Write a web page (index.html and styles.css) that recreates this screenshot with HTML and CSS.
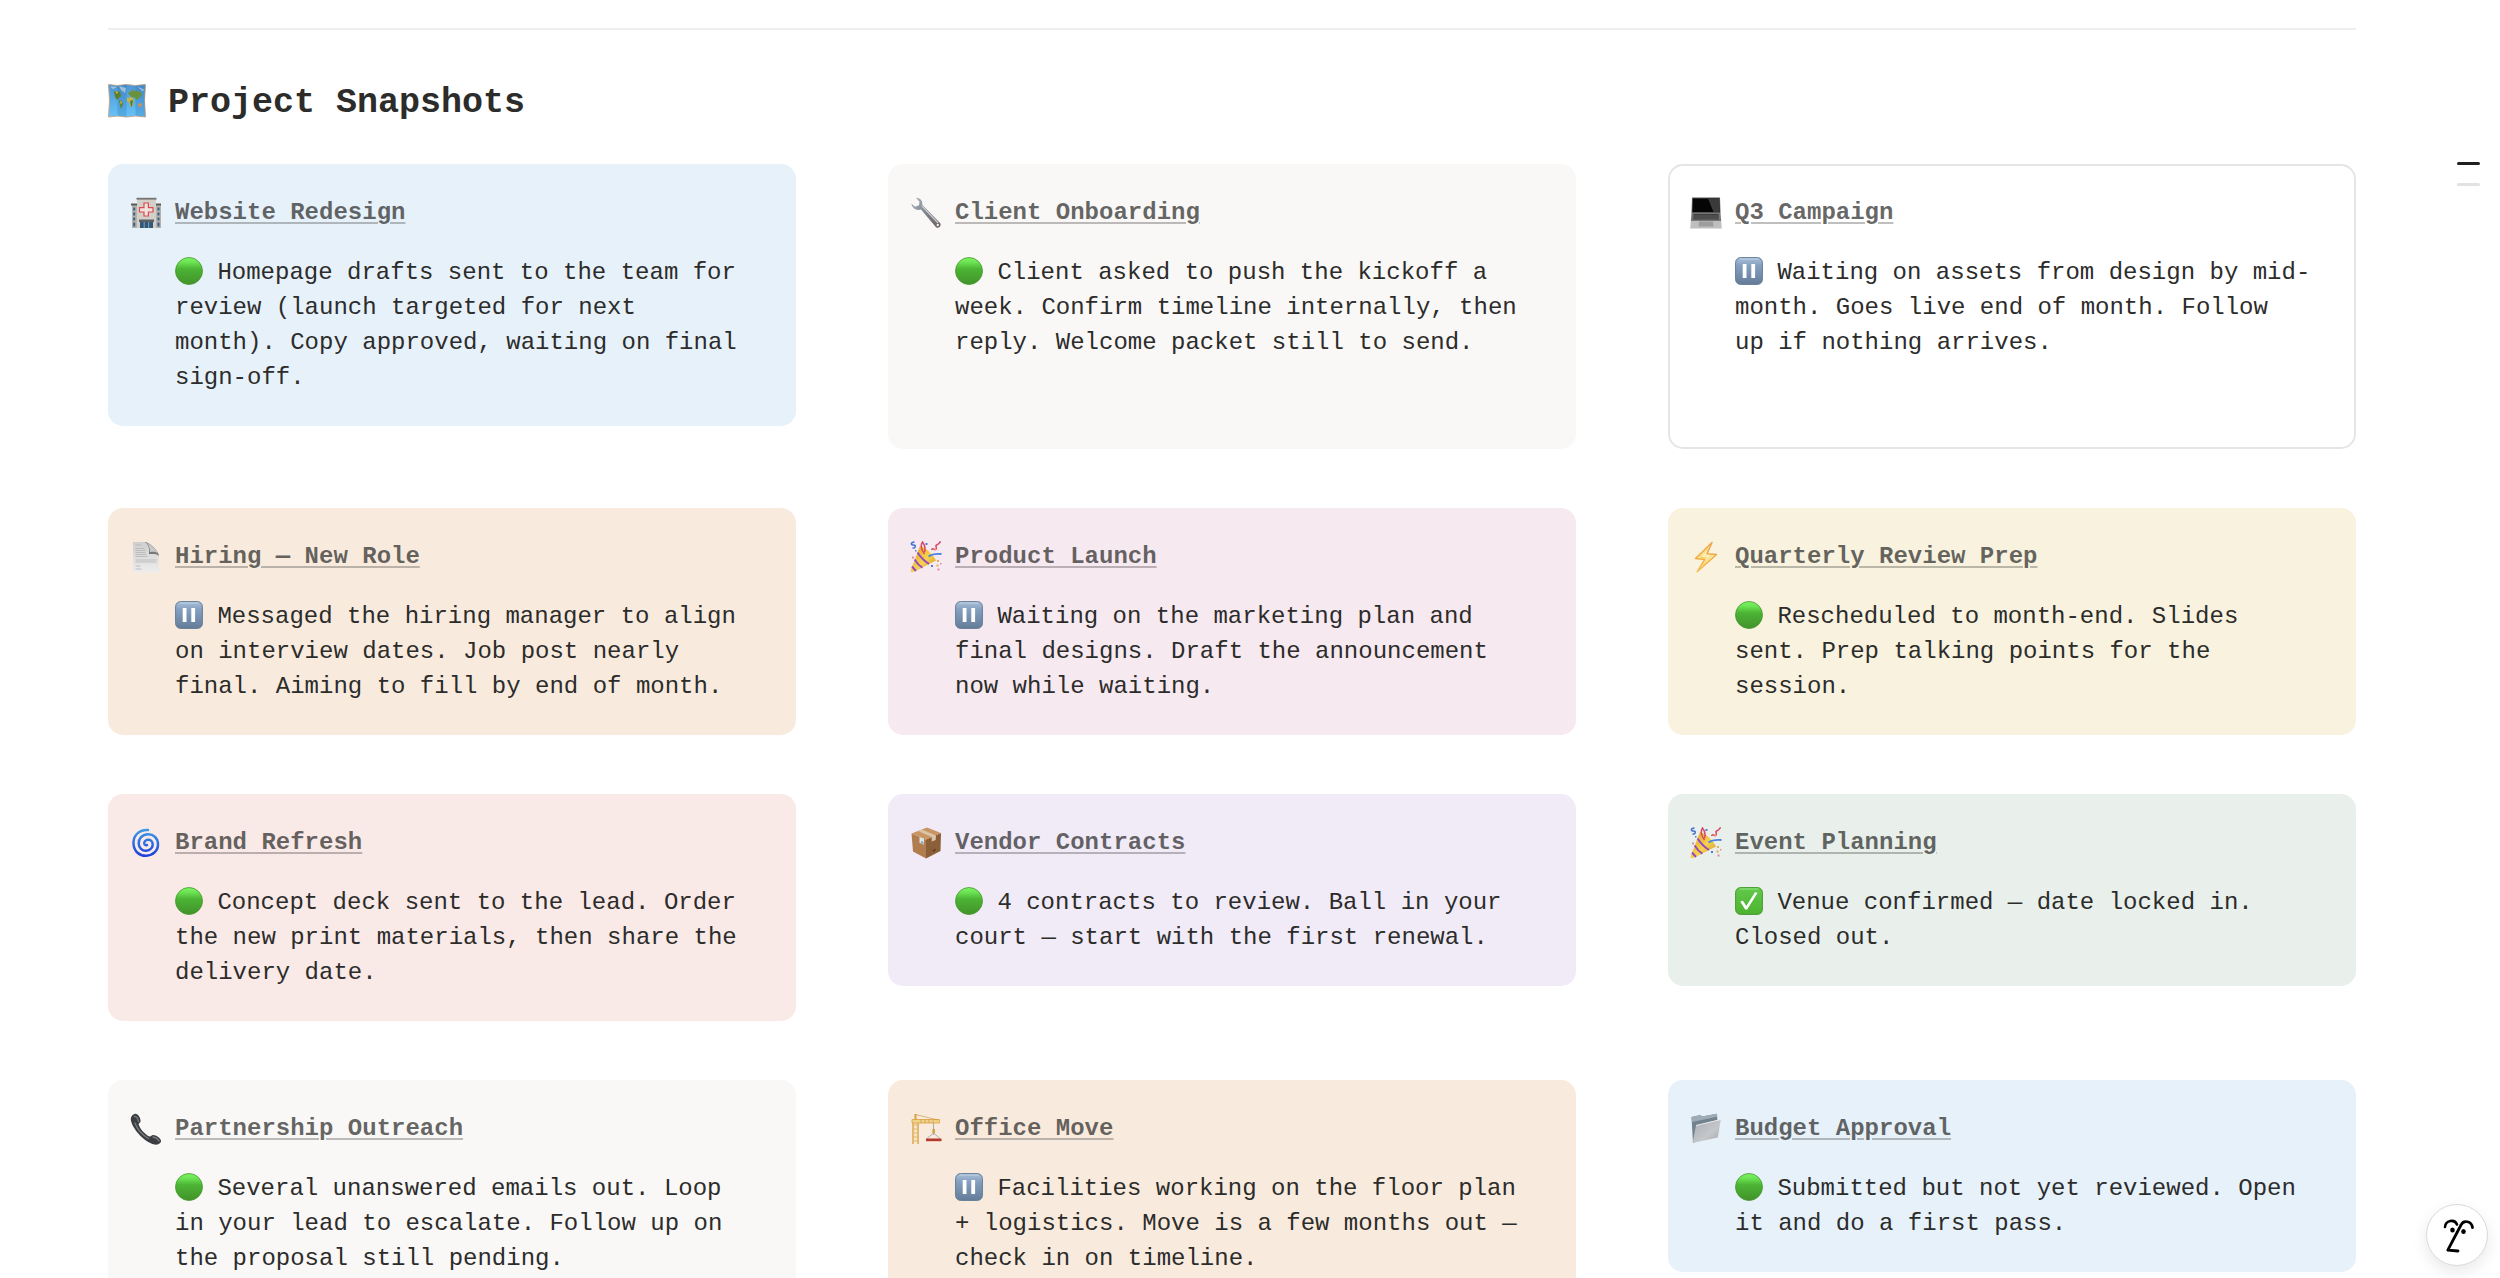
FILE: index.html
```html
<!DOCTYPE html>
<html lang="en">
<head>
<meta charset="utf-8">
<meta name="viewport" content="width=device-width, initial-scale=1">
<title>Project Snapshots</title>
<link rel="stylesheet" href="styles.css">
</head>
<body>
<svg class="sprite" aria-hidden="true">
  <defs>
    <linearGradient id="g-green" x1="0" y1="0" x2="0" y2="1"><stop offset="0" stop-color="#7df563"/><stop offset=".18" stop-color="#6be352"/><stop offset=".42" stop-color="#4cb435"/><stop offset="1" stop-color="#42932a"/></linearGradient>
    <linearGradient id="g-blue" x1="0" y1="0" x2="0" y2="1"><stop offset="0" stop-color="#a9bfd8"/><stop offset=".3" stop-color="#84a0c0"/><stop offset="1" stop-color="#647c98"/></linearGradient>
    <linearGradient id="g-check" x1="0" y1="0" x2="0" y2="1"><stop offset="0" stop-color="#62c94b"/><stop offset="1" stop-color="#4db32f"/></linearGradient>
    <linearGradient id="g-sea" x1="0" y1="0" x2="0" y2="1"><stop offset="0" stop-color="#4e95d2"/><stop offset="1" stop-color="#67c3f7"/></linearGradient>
    <linearGradient id="g-steel" x1="0" y1="0" x2="1" y2="1"><stop offset="0" stop-color="#a9b6c2"/><stop offset=".5" stop-color="#7f858c"/><stop offset="1" stop-color="#6c5c5c"/></linearGradient>
    <linearGradient id="g-swirl" x1="0" y1="0" x2="0" y2="1"><stop offset="0" stop-color="#3a9be6"/><stop offset="1" stop-color="#1f3fdc"/></linearGradient>
    <linearGradient id="g-cone" x1="0" y1="0" x2="1" y2="1"><stop offset="0" stop-color="#d99a1f"/><stop offset=".55" stop-color="#f7d34e"/><stop offset="1" stop-color="#c98a1c"/></linearGradient>
    <linearGradient id="g-paper" x1="0" y1="0" x2="0" y2="1"><stop offset="0" stop-color="#cfcfcf"/><stop offset="1" stop-color="#ededed"/></linearGradient>
    <linearGradient id="g-bolt" x1="0" y1="0" x2="0" y2="1"><stop offset="0" stop-color="#f0a350"/><stop offset=".5" stop-color="#f2a93b"/><stop offset="1" stop-color="#f6bd55"/></linearGradient>
    <linearGradient id="g-folder" x1="0" y1="0" x2="1" y2="1"><stop offset="0" stop-color="#a8aeb3"/><stop offset=".6" stop-color="#c5c7ca"/><stop offset="1" stop-color="#a2a5a9"/></linearGradient>
  </defs>

  <symbol id="on-track" viewBox="0 0 28 28">
    <circle cx="14" cy="14" r="13.5" fill="url(#g-green)" stroke="#48972f" stroke-opacity=".8"/>
  </symbol>
  <symbol id="paused" viewBox="0 0 28 28">
    <rect x=".6" y=".6" width="26.8" height="26.8" rx="5" fill="url(#g-blue)" stroke="#647c98"/>
    <path d="M5 2h18" stroke="#c0d0e1" stroke-linecap="round"/>
    <path d="M7.7 7h3.8v14H7.7zM16.3 7h3.8v14h-3.8z" fill="#fff"/>
  </symbol>
  <symbol id="done" viewBox="0 0 28 28">
    <rect x=".6" y=".6" width="26.8" height="26.8" rx="5" fill="url(#g-check)" stroke="#47992f"/>
    <path d="M5 2h18" stroke="#9be58a" stroke-linecap="round"/>
    <path d="M5.2 14.6l2.8-.8 3.3 5.2L20 5.3l2.6.5L12.2 22.6h-2z" fill="#fff"/>
  </symbol>

  <symbol id="map" viewBox="0 0 38 38">
    <path d="M.5 3.5l9 1 9-1 9 1 10-1-1 16 1 16.500-10-1-9 1-9-1-9 1 1-16z" fill="url(#g-sea)" stroke="#bfa893"/>
    <path d="M9.500 4.500l9-1v32l-9-1zM27.500 4.500l9.500-1v32l-9.500-1z" fill="#1a5fa3" opacity=".22"/>
    <path d="M2 5.500l7 .5-4 2zM11 5l7 2-1 5-4-3zM29 5.500l7 3-1 2z" fill="#e3e8e6" opacity=".55"/>
    <path d="M6 10l6 1 1 4-4 4-2-3zM11 19l3 1 1 3-2 5-1-4z" fill="#5d7f2c"/>
    <path d="M7 10l3 1-1 2zM12 20l2 1-1 3z" fill="#e0bd41"/>
    <path d="M20 12l5-3 8 2 1 3-3 3-2 2-3-3-2 1z" fill="#68923d"/>
    <path d="M19 17l5-1 2 3-2 7-2-1-1-4-2-1z" fill="#c9b446"/>
    <path d="M22 20l3-1-1 6-1 1z" fill="#4f7f35"/>
    <path d="M30 23l3-1 1 3-3 1z" fill="#dd9040"/>
  </symbol>
  <symbol id="hospital" viewBox="0 0 32 32">
    <path d="M2 8h29v23H2z" fill="#b5b2ae"/>
    <path d="M1 6.500h7v2H1zM25 6.500h6v2h-6z" fill="#5b5a59"/>
    <path d="M7 2h19v29H7z" fill="#d3cfc9"/>
    <path d="M6.500 .800h20v1.800h-20z" fill="#77736e"/>
    <path d="M3.200 10.500h2v3h-2zm0 5h2v3h-2zm0 5h2v3h-2zm0 5h2v4h-2zM27.500 10.500h2v3h-2zm0 5h2v3h-2zm0 5h2v3h-2zm0 5h2v4h-2z" fill="#3b6181"/>
    <path d="M14 6h4.400v4.600H23V15h-4.600v4H14v-4H9.500v-4.400H14z" fill="#efe3e0" stroke="#dc4a50" stroke-width="1.200"/>
    <path d="M9 22.500h15V25H9z" fill="#5d6063"/>
    <path d="M10 25h13v6H10z" fill="#31597a"/>
    <path d="M14.200 25v6M18.700 25v6" stroke="#8fa0ad"/>
  </symbol>
  <symbol id="wrench" viewBox="0 0 32 32">
    <path d="M6 .800c3.800-.200 7 3 6.200 7L30 26c2 2.500-1 6-4 4.200L11 12.500c-4 1.500-9-1-9.600-6L5 9.800l4-1.600.500-3.400z" fill="url(#g-steel)"/>
    <path d="M12 9l16 17" stroke="#c9cdd3" stroke-width="1.200"/>
    <circle cx="27.800" cy="28" r="1.200" fill="#eee"/>
  </symbol>
  <symbol id="laptop" viewBox="0 0 32 32">
    <path d="M2 .500h28l.5 15.500h-29z" fill="#555"/>
    <path d="M3 1.500h26l.5 13.500h-27z" fill="#050505"/>
    <path d="M18 1.500h11l.5 13.500h-6z" fill="#3a3a3a"/>
    <path d="M1.500 16h29l.7 8H.8z" fill="#777"/>
    <path d="M3.500 17h25l.5 5.500H3z" fill="#3e3e3e"/>
    <path d="M3.500 19h25M3 21h26" stroke="#777" stroke-width=".6"/>
    <path d="M.8 24h30.400l.6 7.500H.2z" fill="#bfbfbf"/>
    <path d="M9 24.500h14l.5 5H8.500z" fill="#9d9d9d"/>
  </symbol>
  <symbol id="page" viewBox="0 0 32 32">
    <path d="M3 1h14l12 12v18.500H3z" fill="url(#g-paper)"/>
    <path d="M14.500 1C19.500 1 29 10.500 29 15c-2-2.500-6-2-10-2 .8-5-.5-10.500-4.500-12z" fill="#777"/>
    <path d="M17 2c4.500 2 8 5.500 11 10-3-1.500-5-1.300-8-1-.2-4-1-7-3-9z" fill="#c9c9c9"/>
    <path d="M5.500 4h6M5.500 7.500h9M5.500 9.500h10M5.500 11.500h10M5.500 13.500h11M5.500 15.500h12M5.500 19h21M5.500 21h21M5.500 25h5M5.500 28h6" stroke="#b4b4b4" stroke-width=".8"/>
  </symbol>
  <symbol id="party" viewBox="0 0 32 32">
    <path d="M10 5L.6 29.500c0 1.600 1.600 2.200 3 1.600L26 19.500C22 12 16 7 10 5z" fill="url(#g-cone)"/>
    <path d="M7.500 11.500c3 4.500 7.500 9 11.500 11.500M4.600 18.500c2.500 4 5 6.500 7.800 8.300M2 25.500l4 4.500" fill="none" stroke="#9447c4" stroke-width="1.900"/>
    <path d="M18.500 15.500c3.500-2.500 7-3 13-2.500" fill="none" stroke="#4b83dc" stroke-width="1.900"/>
    <path d="M14.500 13c-3-4-4.500-8-2-12 2.500 3 3 7 2 10M21.500 9c1.500-3.500 3 1.500 4.500-1S24 5 27.500 3.500 28 1 31 1" fill="none" stroke="#da4768" stroke-width="1.500"/>
    <path d="M4.500 1c-4 .5-4 3-1 3s2 3.500-1 3" fill="none" stroke="#3f6fd2" stroke-width="1.500"/>
    <path d="M15.500 2h2v2h-2zM21 24h2v2h-2zM5 9h1.500v1.500H5z" fill="#4b7fd6"/>
    <path d="M27 19h2v2h-2zM24.500 7.500h1.500V9h-1.500zM26.500 23.500h2v2h-2z" fill="#e9ad51"/>
    <path d="M2 15.500h2v2H2zM27.500 27.500h2v2h-2zM30 22h1.500v1.500H30z" fill="#e887a2"/>
  </symbol>
  <symbol id="bolt" viewBox="0 0 32 32">
    <path d="M22 1.500L5.500 17.500l9.300 1-7.600 12.300L26.500 13.500l-9.500-.7z" fill="#fbeeb4" stroke="url(#g-bolt)" stroke-width="1.500" stroke-linejoin="round"/>
    <path d="M18 7.500L9.500 16l7.500 1M13 24l8.500-9.500" fill="none" stroke="#f5cf5a"/>
  </symbol>
  <symbol id="swirl" viewBox="0 0 32 32">
    <path d="M18 3C8 2.500 3 9.500 3.500 17c.5 7.500 6 12 12.700 11.800 7-.3 12-5.300 11.800-11.800-.2-6-4.500-10-10-9.800-6 .2-9.500 4.300-9.300 9.300.2 4.500 3.500 7.300 7.300 7.200 4.500-.1 7-3.500 6.700-6.700-.3-3-2.500-4.500-4.700-4.300-2.500.2-4 2-3.700 3.800.3 1.500 1.500 2 2.700 1.500" fill="none" stroke="url(#g-swirl)" stroke-width="2.500" stroke-linecap="round"/>
  </symbol>
  <symbol id="parcel" viewBox="0 0 32 32">
    <path d="M1.500 6.500L16 12.500v19L3 24.500z" fill="#b27d4e"/>
    <path d="M31 6L16 12.500v19l14.500-7.500z" fill="#8b5f38"/>
    <path d="M1.500 6.500L17 .5l14 5.500-15 6.500z" fill="#c89563"/>
    <path d="M8 4l4-1.600 14 6-.3 4.500-4 1.600V10z" fill="#dac4a5"/>
    <path d="M9.500 10l4.500 1.800v6l-4.500-2z" fill="#dfe4e5"/>
    <path d="M11 14l2.500 1v2L11 16z" fill="#7f9fb4"/>
    <path d="M22 23.500l4-2-1.500 3.500z" fill="#5f3d20"/>
  </symbol>
  <symbol id="phone" viewBox="0 0 32 32">
    <path d="M4.500 1C7.500-.5 11 5 10.500 8.500c-.2 1.500-2 1.500-1.800 3C9.500 15.500 15.500 22 19.500 23.500c1.500.5 2-1.500 3.500-1.500 3.500 0 8.500 3.500 8 6.500-.5 2.500-4 3.500-6.500 3C13.500 29 1.500 14.500.8 6.500.6 4 2 2 4.500 1z" fill="#3c3d40"/>
    <path d="M4.500 3.500c2 0 3.500 2.500 4 5M5 10c2 6 7.500 12 13.500 15.500M23 24c3 .5 5 2 6 4" fill="none" stroke="#77797d" stroke-width="1.400" stroke-linecap="round"/>
  </symbol>
  <symbol id="crane" viewBox="0 0 32 32">
    <path d="M3 9v22M8 9v22" stroke="#dca74b" stroke-width="1.500"/>
    <path d="M3 10l5 4-5 4 5 4-5 4 5 4M8 10l-5 4 5 4-5 4 5 4-5 4" fill="none" stroke="#e6bf70" stroke-width=".9"/>
    <path d="M2 6.500h27.500v3.500H2z" fill="#f0d28b" stroke="#d9a03c" stroke-width=".8"/>
    <path d="M4.500 1h2v6h-2z" fill="#dba03e"/>
    <path d="M5.500 1.500L28 7M11 6.500v3.500M15 6.500v3.500M19 6.500v3.500M23 6.500v3.500" stroke="#c89037" stroke-width=".6"/>
    <path d="M23.500 10v12M23.500 20L17 25.500M23.500 20l6.500 5.500" fill="none" stroke="#a39b90" stroke-width=".8"/>
    <path d="M22.500 16h2.400v4h-2.400z" fill="#d59a36"/>
    <path d="M16 25.500h15.500v2.700H16z" fill="#b5382c"/>
  </symbol>
  <symbol id="folder" viewBox="0 0 32 32">
    <path d="M1.500 4l9-2 1.500 1.500L27 .8l1 16L3 30z" fill="#72828f"/>
    <path d="M1.500 4l9-2 1.500 1.500L27 .8v3L2 9z" fill="#9eacb5"/>
    <path d="M6 12.500l24.800-6-3 18L2.500 30z" fill="url(#g-folder)"/>
    <path d="M6 12.500l24.800-6" stroke="#ecedee"/>
  </symbol>
  <symbol id="face" viewBox="0 0 60 60">
    <path d="M18 22c.5-6.500 9.500-8.500 12-2.500" fill="none" stroke="#000" stroke-width="2.600" stroke-linecap="round"/>
    <path d="M45.500 22.500c-1-6.500-9-8-11.500-2.500L20.800 45.200l10.200.8" fill="none" stroke="#000" stroke-width="2.800" stroke-linecap="round" stroke-linejoin="round"/>
    <ellipse cx="25.500" cy="25" rx="2.300" ry="2.500"/>
    <ellipse cx="36.500" cy="26.500" rx="2.300" ry="2.500"/>
  </symbol>
</svg>

<main class="page">
  <hr class="divider">
  <h2 class="heading"><svg class="heading-icon"><use href="#map"/></svg>Project Snapshots</h2>

  <section class="cards">
    <article class="card blue">
      <svg class="icon"><use href="#hospital"/></svg>
      <h3 class="title"><a href="#">Website Redesign</a></h3>
      <p class="note"><svg class="status"><use href="#on-track"/></svg> Homepage drafts sent to the team for review (launch targeted for next month). Copy approved, waiting on final sign-off.</p>
    </article>
    <article class="card gray tall">
      <svg class="icon"><use href="#wrench"/></svg>
      <h3 class="title"><a href="#">Client Onboarding</a></h3>
      <p class="note"><svg class="status"><use href="#on-track"/></svg> Client asked to push the kickoff a week. Confirm timeline internally, then reply. Welcome packet still to send.</p>
    </article>
    <article class="card outlined tall">
      <svg class="icon"><use href="#laptop"/></svg>
      <h3 class="title"><a href="#">Q3 Campaign</a></h3>
      <p class="note"><svg class="status"><use href="#paused"/></svg> Waiting on assets from design by mid-month. Goes live end of month. Follow up if nothing arrives.</p>
    </article>

    <article class="card orange">
      <svg class="icon"><use href="#page"/></svg>
      <h3 class="title"><a href="#">Hiring — New Role</a></h3>
      <p class="note"><svg class="status"><use href="#paused"/></svg> Messaged the hiring manager to align on interview dates. Job post nearly final. Aiming to fill by end of month.</p>
    </article>
    <article class="card pink">
      <svg class="icon"><use href="#party"/></svg>
      <h3 class="title"><a href="#">Product Launch</a></h3>
      <p class="note"><svg class="status"><use href="#paused"/></svg> Waiting on the marketing plan and final designs. Draft the announcement now while waiting.</p>
    </article>
    <article class="card yellow">
      <svg class="icon"><use href="#bolt"/></svg>
      <h3 class="title"><a href="#">Quarterly Review Prep</a></h3>
      <p class="note"><svg class="status"><use href="#on-track"/></svg> Rescheduled to month-end. Slides sent. Prep talking points for the session.</p>
    </article>

    <article class="card red">
      <svg class="icon"><use href="#swirl"/></svg>
      <h3 class="title"><a href="#">Brand Refresh</a></h3>
      <p class="note"><svg class="status"><use href="#on-track"/></svg> Concept deck sent to the lead. Order the new print materials, then share the delivery date.</p>
    </article>
    <article class="card purple">
      <svg class="icon"><use href="#parcel"/></svg>
      <h3 class="title"><a href="#">Vendor Contracts</a></h3>
      <p class="note"><svg class="status"><use href="#on-track"/></svg> 4 contracts to review. Ball in your court — start with the first renewal.</p>
    </article>
    <article class="card green">
      <svg class="icon"><use href="#party"/></svg>
      <h3 class="title"><a href="#">Event Planning</a></h3>
      <p class="note"><svg class="status"><use href="#done"/></svg> Venue confirmed — date locked in. Closed out.</p>
    </article>

    <article class="card gray">
      <svg class="icon"><use href="#phone"/></svg>
      <h3 class="title"><a href="#">Partnership Outreach</a></h3>
      <p class="note"><svg class="status"><use href="#on-track"/></svg> Several unanswered emails out. Loop in your lead to escalate. Follow up on the proposal still pending.</p>
    </article>
    <article class="card orange">
      <svg class="icon"><use href="#crane"/></svg>
      <h3 class="title"><a href="#">Office Move</a></h3>
      <p class="note"><svg class="status"><use href="#paused"/></svg> Facilities working on the floor plan + logistics. Move is a few months out — check in on timeline.</p>
    </article>
    <article class="card blue">
      <svg class="icon"><use href="#folder"/></svg>
      <h3 class="title"><a href="#">Budget Approval</a></h3>
      <p class="note"><svg class="status"><use href="#on-track"/></svg> Submitted but not yet reviewed. Open it and do a first pass.</p>
    </article>
  </section>
</main>

<nav class="outline">
  <a class="mark current" href="#"></a>
  <a class="mark" href="#"></a>
</nav>
<button class="assistant" type="button"><svg class="assistant-face"><use href="#face"/></svg></button>
</body>
</html>
```

FILE: styles.css
```css
* {
  box-sizing: border-box;
}

body {
  margin: 0;
  background: #fff;
  color: #2c2c2b;
  font: 24px/35px "Liberation Mono", monospace;
}

.sprite {
  position: absolute;
  width: 0;
  height: 0;
}

.page {
  padding: 28px 144px 60px 108px;
}

.divider {
  height: 2px;
  margin: 0 0 51px;
  border: 0;
  background: #eeeeec;
}

.heading {
  display: flex;
  align-items: flex-start;
  gap: 22px;
  margin: 0 0 38px;
  font-size: 35px;
  line-height: 45px;
}

.heading-icon {
  flex: none;
  width: 38px;
  height: 38px;
}

.cards {
  display: grid;
  grid-template-columns: repeat(3, minmax(0, 1fr));
  gap: 59px 92px;
  align-items: start;
}

.card {
  display: grid;
  grid-template-columns: 32px minmax(0, 1fr);
  gap: 25px 13px;
  align-content: start;
  align-items: center;
  padding: 31px 45px 31px 22px;
  border-radius: 15px;
}

.tall {
  min-height: 285px;
}

.blue { background: #e7f1fa; }
.gray { background: #f9f8f7; }
.orange { background: #f8ebde; }
.pink { background: #f7e9f0; }
.yellow { background: #f8f2df; }
.red { background: #f9e9e7; }
.purple { background: #f1ebf7; }
.green { background: #e9f0eb; }
.outlined { box-shadow: inset 0 0 0 2px #e6e5e3; }

.icon {
  width: 32px;
  height: 32px;
}

.title {
  margin: 0;
  font-size: 24px;
}

.title a {
  color: rgba(44, 44, 43, 0.72);
  text-decoration: underline 2px rgba(44, 44, 43, 0.3);
  text-underline-offset: 3px;
}

.note {
  grid-column: 2;
  margin: 0;
}

.status {
  width: 28px;
  height: 28px;
  margin: -4px 0;
  vertical-align: -2px;
}

.outline {
  position: fixed;
  top: 162px;
  right: 20px;
  display: grid;
  gap: 18px;
}

.mark {
  width: 23px;
  height: 3px;
  border-radius: 2px;
  background: #e3e2e0;
}

.current {
  background: #1f1f1e;
}

.assistant {
  position: fixed;
  right: 12px;
  bottom: 12px;
  width: 62px;
  height: 62px;
  padding: 0;
  border: 1px solid #d9d9d8;
  border-radius: 50%;
  background: #fff;
  box-shadow: 0 6px 16px rgba(0, 0, 0, 0.09);
}

.assistant-face {
  display: block;
  width: 60px;
  height: 60px;
}
```
